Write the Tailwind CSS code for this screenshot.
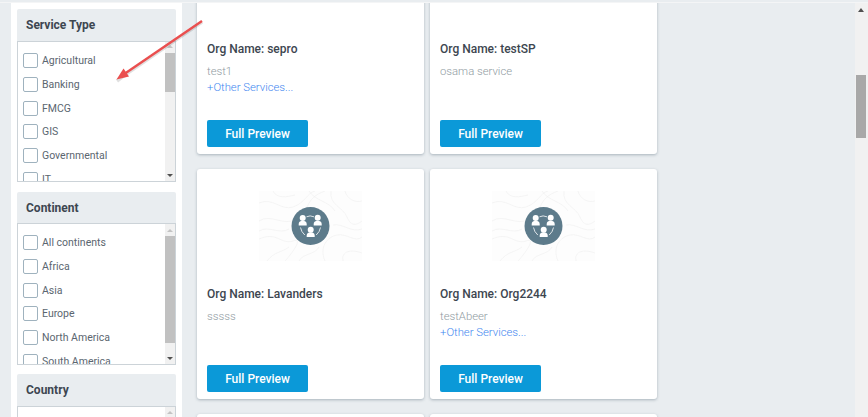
<!doctype html>
<html><head><meta charset="utf-8"><script src="https://cdn.jsdelivr.net/npm/@tailwindcss/browser@4"></script></head>
<body class="m-0">
<svg width="0" height="0" class="absolute"><defs>
<g id="org">
<rect width="103" height="70" fill="#fdfdfd"/>
<g fill="none" stroke="#f1f1f1" stroke-width="0.7">
<path d="M0 12C14 6 22 20 34 16S48 2 56 0"/><path d="M0 30C12 22 24 36 38 28S44 8 66 0"/><path d="M0 48C18 40 22 54 34 50S30 66 26 70"/><path d="M8 70C16 60 22 62 30 56"/><path d="M0 40C10 34 20 44 30 38"/><path d="M14 0C18 8 28 6 36 4"/>
<path d="M66 70C60 56 68 46 78 44S96 52 103 46"/><path d="M72 0C70 14 84 16 88 26S98 34 103 30"/><path d="M86 0C88 8 96 12 103 10"/><path d="M84 70C82 60 92 58 103 62"/><path d="M50 0C56 10 70 10 76 20"/><path d="M74 34C84 32 92 42 103 38"/><path d="M40 70C44 62 56 64 60 56"/>
</g>
<circle cx="51.5" cy="35" r="19" fill="#5d7b8b"/>
<g fill="#fff"><circle cx="43.700" cy="27" r="3"/><path d="M39.700 34.500v-1.500c0-2 1.800-3.200 4-3.200s4 1.200 4 3.200v1.500z"/><circle cx="58.700" cy="26.700" r="3"/><path d="M54.700 34.500v-1.500c0-2 1.800-3.200 4-3.200s4 1.200 4 3.200v1.500z"/><circle cx="51.700" cy="38.800" r="3"/><path d="M47.700 46v-1.500c0-2 1.800-3.200 4-3.200s4 1.200 4 3.200v1.500z"/></g>
<path d="M47.500 25.800q3.500-1.800 7.500 0M41.500 36.500q.8 4.500 4.300 7.500M61.500 36.500q-.8 4.500-4.300 7.500" fill="none" stroke="#fff" stroke-width="0.8"/>
</g></defs></svg>

<div class="relative w-[868px] h-[417px] overflow-hidden bg-[#e9edf0] font-['Roboto',sans-serif]">
  <div class="h-[3px] border-b border-[#f4f5f6]"></div>
  <div class="flex h-[414px] overflow-hidden">
    <aside class="ml-[11px] w-[171px] h-[440px] shrink-0 bg-white px-[6px] pt-[6px] flex flex-col">
      <section class="shrink-0">
        <h3 class="h-[32px] bg-[#e9edf0] pl-[9px] flex items-center text-[12px] font-bold text-[#3d4650] rounded-t-[2px]">Service Type</h3>
        <div class="h-[141px] border border-[#ccd3d8] flex overflow-hidden">
          <ul class="flex-1 pl-[5px] pt-[11px] flex flex-col gap-[8.800px] text-[10.500px] leading-[15px] text-[#5b6670]">
            <li class="flex items-center gap-[4px] shrink-0"><span class="w-[15px] h-[15px] border border-[#9fb2be] rounded-[2px]"></span>Agricultural</li>
            <li class="flex items-center gap-[4px] shrink-0"><span class="w-[15px] h-[15px] border border-[#9fb2be] rounded-[2px]"></span>Banking</li>
            <li class="flex items-center gap-[4px] shrink-0"><span class="w-[15px] h-[15px] border border-[#9fb2be] rounded-[2px]"></span>FMCG</li>
            <li class="flex items-center gap-[4px] shrink-0"><span class="w-[15px] h-[15px] border border-[#9fb2be] rounded-[2px]"></span>GIS</li>
            <li class="flex items-center gap-[4px] shrink-0"><span class="w-[15px] h-[15px] border border-[#9fb2be] rounded-[2px]"></span>Governmental</li>
            <li class="flex items-center gap-[4px] shrink-0"><span class="w-[15px] h-[15px] border border-[#9fb2be] rounded-[2px]"></span>IT</li>
          </ul>
          <div class="w-[10px] bg-[#f1f1f1] flex flex-col items-center">
            <span class="mt-[3px] h-0 w-0 border-x-[3px] border-b-[3px] border-x-transparent border-b-[#c4c4c4]"></span>
            <span class="mt-[5px] h-[39px] w-full bg-[#c1c1c1]"></span>
            <span class="mt-auto mb-[4px] h-0 w-0 border-x-[3px] border-t-[3px] border-x-transparent border-t-[#505050]"></span>
          </div>
        </div>
      </section>
      <section class="shrink-0 mt-[10px]">
        <h3 class="h-[31px] pt-[1px] bg-[#e9edf0] pl-[9px] flex items-center text-[12px] font-bold text-[#3d4650] rounded-t-[2px]">Continent</h3>
        <div class="h-[142px] border border-[#ccd3d8] flex overflow-hidden">
          <ul class="flex-1 pl-[5px] pt-[11px] flex flex-col gap-[8.800px] text-[10.500px] leading-[15px] text-[#5b6670]">
            <li class="flex items-center gap-[4px] shrink-0"><span class="w-[15px] h-[15px] border border-[#9fb2be] rounded-[2px]"></span>All continents</li>
            <li class="flex items-center gap-[4px] shrink-0"><span class="w-[15px] h-[15px] border border-[#9fb2be] rounded-[2px]"></span>Africa</li>
            <li class="flex items-center gap-[4px] shrink-0"><span class="w-[15px] h-[15px] border border-[#9fb2be] rounded-[2px]"></span>Asia</li>
            <li class="flex items-center gap-[4px] shrink-0"><span class="w-[15px] h-[15px] border border-[#9fb2be] rounded-[2px]"></span>Europe</li>
            <li class="flex items-center gap-[4px] shrink-0"><span class="w-[15px] h-[15px] border border-[#9fb2be] rounded-[2px]"></span>North America</li>
            <li class="flex items-center gap-[4px] shrink-0"><span class="w-[15px] h-[15px] border border-[#9fb2be] rounded-[2px]"></span>South America</li>
          </ul>
          <div class="w-[10px] bg-[#f1f1f1] flex flex-col items-center">
            <span class="mt-[5px] h-0 w-0 border-x-[3px] border-b-[3px] border-x-transparent border-b-[#c4c4c4]"></span>
            <span class="mt-[4px] h-[107px] w-full bg-[#c1c1c1]"></span>
            <span class="mt-auto mb-[4px] h-0 w-0 border-x-[3px] border-t-[3px] border-x-transparent border-t-[#505050]"></span>
          </div>
        </div>
      </section>
      <section class="shrink-0 mt-[9px]">
        <h3 class="h-[32px] bg-[#e9edf0] pl-[9px] flex items-center text-[12px] font-bold text-[#3d4650] rounded-t-[2px]">Country</h3>
        <div class="h-[40px] border border-[#ccd3d8] flex justify-end">
          <div class="w-[10px] bg-[#f1f1f1] flex flex-col items-center">
            <span class="mt-[4px] h-0 w-0 border-x-[3px] border-b-[3px] border-x-transparent border-b-[#c4c4c4]"></span>
          </div>
        </div>
      </section>
    </aside>

    <main class="ml-[15px] w-[460px] shrink-0 mt-[-79px] grid grid-cols-[227px_227px] auto-rows-[230px] gap-x-[6px] gap-y-[15px]">
      <article class="bg-white rounded-[3px] shadow-[0_1px_3px_rgba(90,110,125,0.45)] px-[10px] pt-[22px] pb-[7px] flex flex-col">
        <div class="h-[70px]"></div>
        <h4 class="mt-[25px] text-[12px] leading-[16px] font-medium text-[#3d4650]">Org Name: sepro</h4>
        <p class="mt-[7px] text-[11.300px] font-light leading-[16px] text-[#8f9aa1]">test1</p>
        <a class="text-[11.300px] font-light leading-[16px] text-[#3f87f0]">+Other Services...</a>
        <button class="mt-auto w-[101px] h-[27px] bg-[#0b99d8] rounded-[2px] text-white text-[12px] font-medium">Full Preview</button>
      </article>
      <article class="bg-white rounded-[3px] shadow-[0_1px_3px_rgba(90,110,125,0.45)] px-[10px] pt-[22px] pb-[7px] flex flex-col">
        <div class="h-[70px]"></div>
        <h4 class="mt-[25px] text-[12px] leading-[16px] font-medium text-[#3d4650]">Org Name: testSP</h4>
        <p class="mt-[7px] text-[11.300px] font-light leading-[16px] text-[#8f9aa1]">osama service</p>
        <button class="mt-auto w-[101px] h-[27px] bg-[#0b99d8] rounded-[2px] text-white text-[12px] font-medium">Full Preview</button>
      </article>
      <article class="bg-white rounded-[3px] shadow-[0_1px_3px_rgba(90,110,125,0.45)] px-[10px] pt-[22px] pb-[7px] flex flex-col">
        <svg class="mx-auto w-[103px] h-[70px] shrink-0" viewBox="0 0 103 70"><use href="#org"/></svg>
        <h4 class="mt-[25px] text-[12px] leading-[16px] font-medium text-[#3d4650]">Org Name: Lavanders</h4>
        <p class="mt-[7px] text-[11.300px] font-light leading-[16px] text-[#8f9aa1]">sssss</p>
        <button class="mt-auto w-[101px] h-[27px] bg-[#0b99d8] rounded-[2px] text-white text-[12px] font-medium">Full Preview</button>
      </article>
      <article class="bg-white rounded-[3px] shadow-[0_1px_3px_rgba(90,110,125,0.45)] px-[10px] pt-[22px] pb-[7px] flex flex-col">
        <svg class="mx-auto w-[103px] h-[70px] shrink-0" viewBox="0 0 103 70"><use href="#org"/></svg>
        <h4 class="mt-[25px] text-[12px] leading-[16px] font-medium text-[#3d4650]">Org Name: Org2244</h4>
        <p class="mt-[7px] text-[11.300px] font-light leading-[16px] text-[#8f9aa1]">testAbeer</p>
        <a class="text-[11.300px] font-light leading-[16px] text-[#3f87f0]">+Other Services...</a>
        <button class="mt-auto w-[101px] h-[27px] bg-[#0b99d8] rounded-[2px] text-white text-[12px] font-medium">Full Preview</button>
      </article>
      <article class="bg-white rounded-[3px] shadow-[0_1px_3px_rgba(90,110,125,0.45)]"></article>
      <article class="bg-white rounded-[3px] shadow-[0_1px_3px_rgba(90,110,125,0.45)]"></article>
    </main>

    <div class="ml-auto w-[13px] shrink-0 bg-[#f1f1f1] flex flex-col items-center pr-[2px]">
      <span class="mt-[5px] h-0 w-0 border-x-[3px] border-b-[4px] border-x-transparent border-b-[#505050]"></span>
      <span class="mt-[63px] h-[63px] w-[10px] bg-[#a8a8a8]"></span>
    </div>
  </div>
  <svg class="absolute left-0 top-0 pointer-events-none" width="868" height="417" viewBox="0 0 868 417">
    <path d="M202 22L124 75.500L117 81" stroke="#000" stroke-opacity="0.12" stroke-width="3.500" fill="none"/>
    <path d="M202 21L125 73.500" stroke="#ea4f4f" stroke-width="2.400" fill="none"/>
    <path d="M116.500 79.500L129 76.500L123.500 68.500z" fill="#ea4f4f"/>
  </svg>
</div>
</body></html>
